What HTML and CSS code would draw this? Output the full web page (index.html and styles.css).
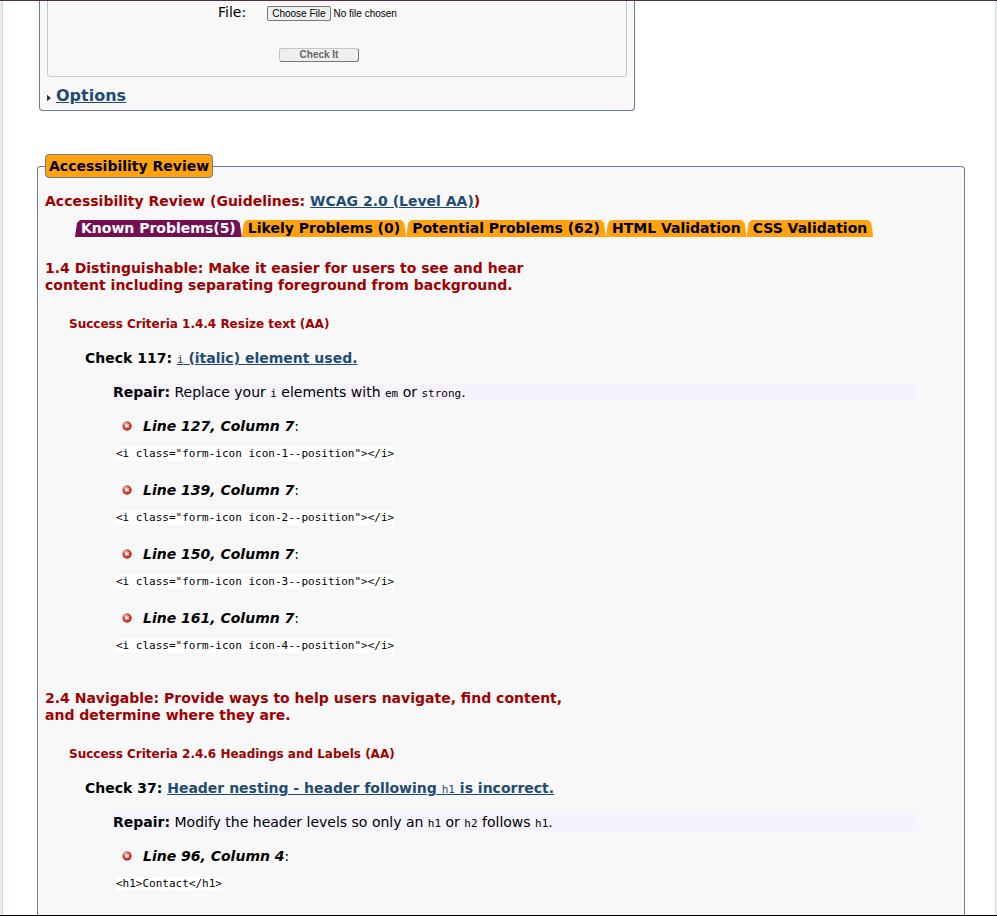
FILE: index.html
```html
<!DOCTYPE html>
<html lang="en">
<head>
<meta charset="utf-8">
<title>Web Accessibility Checker</title>
<link rel="stylesheet" href="styles.css">
</head>
<body>
<svg class="sprite" aria-hidden="true">
  <defs>
    <radialGradient id="ball" cx="35%" cy="25%" r="80%">
      <stop offset="0" stop-color="#f0b0a8"/>
      <stop offset=".45" stop-color="#cf4a40"/>
      <stop offset="1" stop-color="#b3241c"/>
    </radialGradient>
    <symbol id="error" viewBox="0 0 10 10">
      <circle cx="5" cy="5" r="4.7" fill="url(#ball)"/>
      <path d="M3.4 3.4l3.2 3.2M6.6 3.4L3.4 6.6" stroke="#fff" stroke-width="1.4"/>
    </symbol>
  </defs>
</svg>
<div class="page">
  <form class="checker">
    <div class="upload">
      <div class="file-row">
        <label for="file">File:</label>
        <input type="file" id="file">
      </div>
      <button type="submit" class="check" disabled>Check It</button>
    </div>
    <h2 class="options"><svg class="arrow" viewBox="0 0 5 8"><path d="M0 0l5 4-5 4z" fill="#333"/></svg><a href="#options">Options</a></h2>
  </form>

  <fieldset class="review">
    <legend>Accessibility Review</legend>
    <h3 class="title">Accessibility Review (Guidelines: <a href="#wcag">WCAG 2.0 (Level AA)</a>)</h3>
    <nav class="tabs">
      <a class="tab active" href="#known">Known Problems(5)</a>
      <a class="tab" href="#likely">Likely Problems (0)</a>
      <a class="tab" href="#potential">Potential Problems (62)</a>
      <a class="tab" href="#html">HTML Validation</a>
      <a class="tab" href="#css">CSS Validation</a>
    </nav>

    <section class="guideline">
      <h3>1.4 Distinguishable: Make it easier for users to see and hear content including separating foreground from background.</h3>
      <h4>Success Criteria 1.4.4 Resize text (AA)</h4>
      <h5>Check 117: <a href="#c117"><code>i</code> (italic) element used.</a></h5>
      <p class="repair"><strong>Repair:</strong> Replace your <code>i</code> elements with <code>em</code> or <code>strong</code>.</p>
      <ul>
        <li><p><svg><use href="#error"/></svg><span><em>Line 127, Column 7</em>:</span></p><pre>&lt;i class="form-icon icon-1--position"&gt;&lt;/i&gt;</pre></li>
        <li><p><svg><use href="#error"/></svg><span><em>Line 139, Column 7</em>:</span></p><pre>&lt;i class="form-icon icon-2--position"&gt;&lt;/i&gt;</pre></li>
        <li><p><svg><use href="#error"/></svg><span><em>Line 150, Column 7</em>:</span></p><pre>&lt;i class="form-icon icon-3--position"&gt;&lt;/i&gt;</pre></li>
        <li><p><svg><use href="#error"/></svg><span><em>Line 161, Column 7</em>:</span></p><pre>&lt;i class="form-icon icon-4--position"&gt;&lt;/i&gt;</pre></li>
      </ul>
    </section>

    <section class="guideline">
      <h3>2.4 Navigable: Provide ways to help users navigate, find content, and determine where they are.</h3>
      <h4>Success Criteria 2.4.6 Headings and Labels (AA)</h4>
      <h5>Check 37: <a href="#c37">Header nesting - header following <code>h1</code> is incorrect.</a></h5>
      <p class="repair"><strong>Repair:</strong> Modify the header levels so only an <code>h1</code> or <code>h2</code> follows <code>h1</code>.</p>
      <ul>
        <li><p><svg><use href="#error"/></svg><span><em>Line 96, Column 4</em>:</span></p><pre>&lt;h1&gt;Contact&lt;/h1&gt;</pre></li>
      </ul>
    </section>
  </fieldset>
</div>
</body>
</html>
```

FILE: styles.css
```css
* { box-sizing: border-box; }

body {
  margin: 0;
  border-top: 1px solid #4b3048;
  border-bottom: 2px solid #000;
  background: #e9eded;
  color: #000;
  font: 14px/17px Verdana, "DejaVu Sans", sans-serif;
}

.sprite { position: absolute; width: 0; height: 0; }

h2, h3, h4, h5, p, ul, pre { margin: 0; padding: 0; }

a { color: #1f4c74; }

code, pre { font: 11px/14px "DejaVu Sans Mono", monospace; }

code { line-height: 1; }

.page {
  margin: 0 1px 0 2px;
  padding: 0 30px 0 34px;
  border: solid #d5d9d9;
  border-width: 0 1px;
  background: #fff;
}

.checker {
  max-width: 596px;
  margin-left: 2px;
  padding: 0 7px 4px;
  border: 1px solid #6c7b90;
  border-top: 0;
  border-radius: 0 0 4px 4px;
  background: #f8f8f8;
}

.upload {
  padding: 3px 0 14px;
  border: 1px solid #c8c8c8;
  border-top: 0;
  border-radius: 0 0 4px 4px;
}

.file-row {
  display: flex;
  gap: 21px;
  padding-left: 170px;
}

input[type="file"] {
  padding-top: 2px;
  font: 10px/13px "Liberation Sans", Arial, sans-serif;
}

input::file-selector-button {
  margin: 0 3px 0 0;
  padding: 0 4px;
  border: 1px solid #767676;
  border-radius: 2px;
  background: #efefef;
  color: #000;
  font: inherit;
}

.check {
  display: block;
  width: 80px;
  height: 14px;
  margin: 27px 0 0 231px;
  padding: 0;
  border: 1px solid;
  border-color: #c4c4c4 #777 #777 #c4c4c4;
  border-radius: 3px;
  background: #efefef;
  color: #666;
  font: bold 10px/12px "Liberation Sans", Arial, sans-serif;
}

.options {
  display: flex;
  align-items: center;
  gap: 5px;
  margin-top: 9px;
  font-size: 16px;
  line-height: 20px;
}

.arrow { width: 4px; height: 8px; margin-top: 4px; }

.review {
  min-width: 0;
  margin: 43px 0 0;
  padding: 0 46px 24px 7px;
  border: 1px solid #6c7b90;
  border-bottom: 0;
  border-radius: 4px 4px 0 0;
  background: #f8f8f8;
}

legend {
  padding: 3px 3px 2px;
  border: 1px solid #6c7b90;
  border-radius: 4px;
  background: #ffa20d;
  font-weight: bold;
}

.review h3, .review h4 { color: #a00000; }

.review h3 { font-size: 14px; }

.title { margin-top: 15px; }

.tabs {
  display: flex;
  margin: 10px 0 0 30px;
}

.tab {
  padding: 0 6px;
  background: #ffa20d;
  clip-path: polygon(0 100%, 2px 3px, 5px 0, calc(100% - 5px) 0, calc(100% - 2px) 3px, 100% 100%);
  color: #000;
  font-weight: bold;
  text-decoration: none;
  white-space: nowrap;
}

.tab.active { background: #741052; color: #fff; }

.guideline { padding-top: 23px; }

.guideline + .guideline { padding-top: 37px; }

.guideline h3 { max-width: 530px; }

.review h4 {
  margin: 22px 0 0 24px;
  font-size: 12px;
}

h5 {
  margin: 17px 0 0 40px;
  font-size: 14px;
}

.repair {
  margin: 17px 0 0 68px;
  background: #f6f3ff;
}

ul {
  display: grid;
  gap: 21px;
  margin: 17px 0 0 71px;
  list-style: none;
}

li p {
  display: flex;
  align-items: center;
  gap: 11px;
  padding-left: 6px;
}

li svg { width: 10px; height: 10px; margin-bottom: 2px; }

em { font-weight: bold; }

pre {
  width: fit-content;
  margin-top: 12px;
  background: #fff;
}
```
